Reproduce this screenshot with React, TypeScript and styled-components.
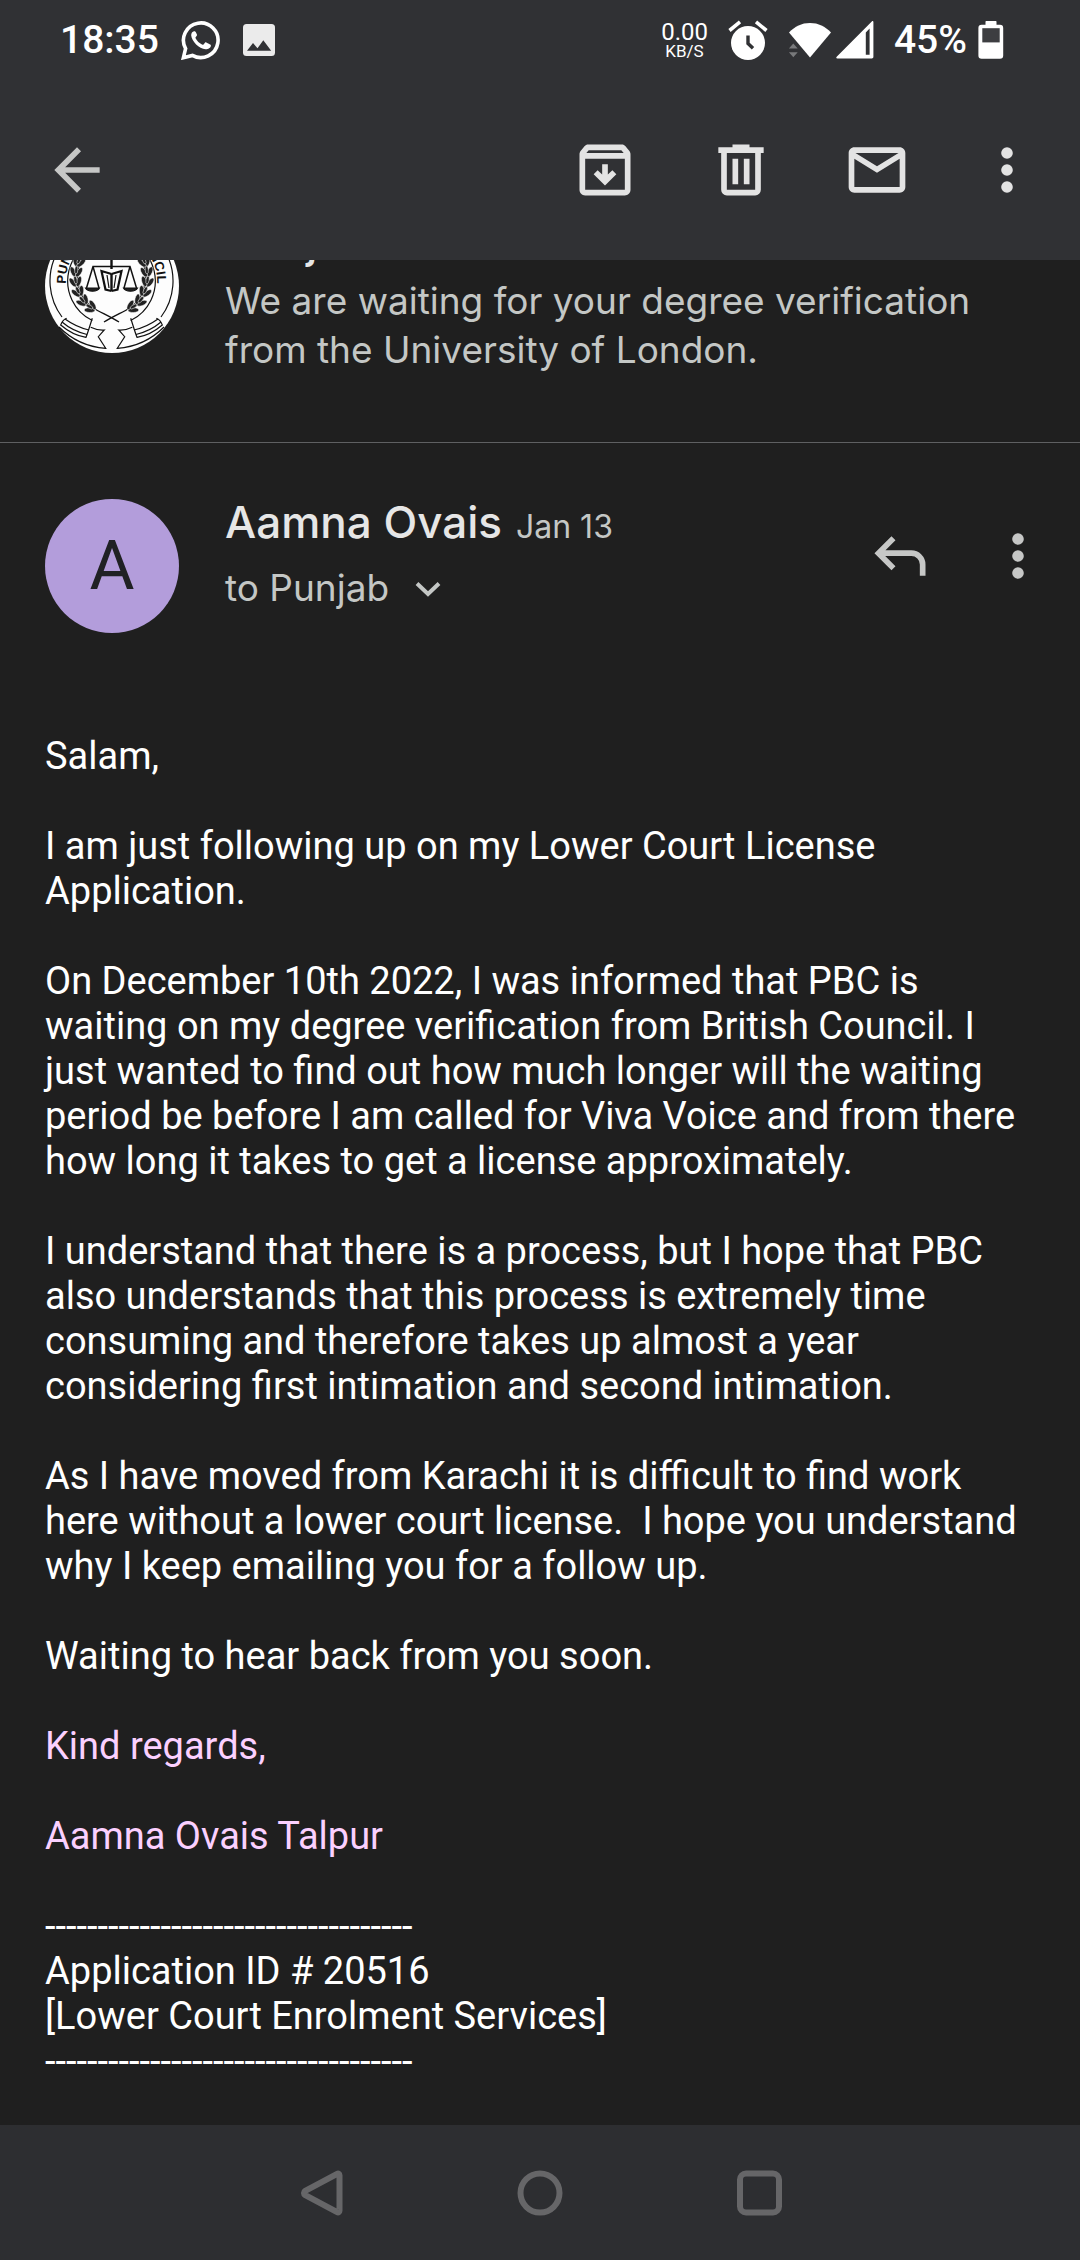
import React from "react";
import styled, { createGlobalStyle } from "styled-components";

const color = {
  bar: "#303134",
  nav: "#2d2e31",
  surface: "#1f1f1f",
  divider: "#5f6062",
  icon: "#e3e3e3",
  iconMuted: "#c6c7c6",
  navIcon: "#666668",
  title: "#e6e6e6",
  muted: "#c4c7c5",
  signature: "#fbd0ff",
};

const GlobalStyle = createGlobalStyle`
  *, *::before, *::after { box-sizing: border-box; }
  body {
    margin: 0;
    background: ${color.surface};
    font-family: Roboto, "Noto Sans", sans-serif;
  }
`;

const Screen = styled.div`
  display: flex;
  flex-direction: column;
  min-height: 100vh;
  background: ${color.surface};
`;

const StatusBar = styled.div`
  display: flex;
  align-items: center;
  justify-content: space-between;
  height: 80px;
  padding: 0 76px 0 60px;
  background: ${color.bar};
  color: #fff;
`;

const StatusGroup = styled.div<{ $gap: number }>`
  display: flex;
  align-items: center;
  gap: ${(p) => p.$gap}px;
`;

const StatusText = styled.span`
  font-size: 39px;
  font-weight: 500;
  line-height: 45px;
`;

const Speed = styled.div`
  display: flex;
  flex-direction: column;
  align-items: center;
`;

const SpeedValue = styled.span`
  font-size: 24px;
  line-height: 22px;
`;

const SpeedUnit = styled.span`
  font-size: 17px;
  line-height: 16px;
`;

const AppBar = styled.header`
  display: flex;
  align-items: center;
  justify-content: space-between;
  height: 180px;
  padding: 0 45px 0 43px;
  background: ${color.bar};
`;

const Actions = styled.div<{ $gap: number }>`
  display: flex;
  align-items: center;
  gap: ${(p) => p.$gap}px;
`;

const IconButton = styled.button<{ $width?: number; $muted?: boolean }>`
  display: flex;
  align-items: center;
  justify-content: center;
  width: ${(p) => p.$width ?? 68}px;
  height: 68px;
  padding: 0;
  border: 0;
  background: none;
  color: ${(p) => (p.$muted ? color.iconMuted : color.icon)};
  cursor: pointer;

  svg {
    flex: none;
    width: 68px;
    height: 68px;
  }
`;

const Thread = styled.main`
  flex: 1;
`;

const CollapsedMessage = styled.article`
  display: flex;
  align-items: flex-end;
  gap: 46px;
  height: 183px;
  padding: 0 45px;
  overflow: hidden;
  border-bottom: 1px solid ${color.divider};
`;

const Crest = styled.svg`
  flex: none;
  width: 134px;
  height: 134px;
  margin-bottom: 89px;
`;

const Preview = styled.div`
  padding-bottom: 68px;
  font-family: Inter, "Noto Sans", sans-serif;
`;

const SenderName = styled.h2`
  margin: 0;
  color: ${color.title};
  font-size: 44px;
  font-weight: 500;
  line-height: 64px;
`;

const PreviewText = styled.p`
  margin: 2px 0 0;
  color: ${color.muted};
  font-size: 37px;
  line-height: 49px;
`;

const Message = styled.article`
  padding: 47px 0 41px;
`;

const MessageHeader = styled.div`
  display: flex;
  align-items: flex-start;
  gap: 46px;
  padding: 0 34px 0 45px;
`;

const Avatar = styled.div`
  display: flex;
  flex: none;
  align-items: center;
  justify-content: center;
  width: 134px;
  height: 134px;
  margin-top: 9px;
  border-radius: 50%;
  background: #b39ddb;
  color: #202124;
  font-size: 69px;
  line-height: 80px;
`;

const Sender = styled.div`
  flex: 1;
  font-family: Inter, "Noto Sans", sans-serif;
`;

const SenderLine = styled.div`
  display: flex;
  align-items: baseline;
  gap: 14px;
`;

const DateText = styled.time`
  color: ${color.muted};
  font-size: 32px;
  line-height: 45px;
`;

const Recipients = styled.button`
  display: flex;
  align-items: center;
  gap: 24px;
  padding: 0;
  border: 0;
  background: none;
  color: ${color.muted};
  font-family: inherit;
  font-size: 37px;
  line-height: 68px;
  cursor: pointer;
`;

const MessageActions = styled(Actions)`
  height: 132px;
`;

const Body = styled.div`
  display: flex;
  flex-direction: column;
  gap: 45px;
  padding: 101px 45px 0;
`;

const Paragraph = styled.p<{ $signature?: boolean }>`
  margin: 0;
  color: ${(p) => (p.$signature ? color.signature : "#fff")};
  font-size: 38px;
  line-height: 45px;
`;

const NavBar = styled.nav`
  display: flex;
  align-items: center;
  justify-content: center;
  gap: 173px;
  height: 135px;
  background: ${color.nav};
`;

const NavButton = styled.button`
  display: flex;
  padding: 0;
  border: 0;
  background: none;
  color: ${color.navIcon};
  cursor: pointer;
`;

const WhatsAppIcon = () => (
  <svg width="40" height="40" viewBox="0 0 40 40">
    <path d="M4.6 28.6A17.3 17.3 0 1 1 11.4 35.4L2.4 37.7z" fill="none" stroke="#fff" strokeWidth="3.6" />
    <path
      d="M13 11.2c-1.5 0-3 2.2-2.8 4.3C10.8 21.5 18 28.8 24.6 29.3c2.4.1 5.2-1.6 5.3-3.6 0-1-.3-1.2-4.6-3.2-.9-.4-1.3.1-2.3 1.6-.6.8-1 .8-2 .3-2.8-1.4-4.9-3.5-6.3-6-.4-.8-.1-1.1.5-1.8 1-1.1 1-1.4.6-2.3-1.3-3-1.4-3.1-2.8-3.1z"
      fill="#fff"
    />
  </svg>
);

const ImageIcon = () => (
  <svg width="32" height="32" viewBox="0 0 32 32">
    <rect width="32" height="32" rx="3.5" fill="#ebebeb" />
    <path d="M4 26.7l6-7.7 4.5 5.3L20.3 16.3l7.9 10.4z" fill={color.bar} />
  </svg>
);

const AlarmIcon = () => (
  <svg width="40" height="40" viewBox="0 0 40 40">
    <circle cx="20" cy="23" r="17" fill="#fff" />
    <path d="M1.5 10.5L12 1.9M28 1.9l10.5 8.6" stroke="#fff" strokeWidth="3.6" />
    <path d="M20 15.5v8l5 4.8" fill="none" stroke={color.bar} strokeWidth="3.4" />
  </svg>
);

const WifiIcon = () => (
  <svg width="44" height="40" viewBox="0 0 44 40">
    <path d="M22 37.4L1 12.4C7 6.4 13.5 3 22 3s15 3.4 21 9.4z" fill="#fff" />
    <path d="M5.3 23.5l4.4 4.9H.9zM.9 32.2h8.8l-4.4 5z" fill="#78797b" />
  </svg>
);

const SignalIcon = () => (
  <svg width="38" height="40" viewBox="0 0 38 40">
    <path
      d="M35.8 1.4c.8-.7 1.6-.4 1.6.7v34.7c0 1-.6 1.6-1.6 1.6H1.4c-1.2 0-1.5-.8-.7-1.6zM29.8 12.6v22.2h3.8V8.4z"
      fill="#fff"
      fillRule="evenodd"
    />
  </svg>
);

const BatteryIcon = () => (
  <svg width="26" height="40" viewBox="0 0 26 40">
    <path
      d="M8.5 1h9c.8 0 1 .4 1 1v2.7H22a3.2 3.2 0 0 1 3.2 3.2v27.6a3.2 3.2 0 0 1-3.2 3.2H3.6a3.2 3.2 0 0 1-3.2-3.2V7.9a3.2 3.2 0 0 1 3.2-3.2h3.9V2c0-.6.2-1 1-1z"
      fill="#fff"
    />
    <path d="M4.3 8.2h17.4v14.2H4.3z" fill="#3d3e41" />
  </svg>
);

const BackIcon = () => (
  <svg viewBox="0 0 24 24" fill="currentColor">
    <path d="M20 11H7.83l5.59-5.59L12 4l-8 8 8 8 1.41-1.41L7.83 13H20z" />
  </svg>
);

const ArchiveIcon = () => (
  <svg viewBox="0 0 24 24" fill="currentColor">
    <path d="M20.54 5.23l-1.39-1.68C18.88 3.21 18.47 3 18 3H6c-.47 0-.88.21-1.16.55L3.46 5.23C3.17 5.57 3 6.02 3 6.5V19c0 1.1.9 2 2 2h14c1.1 0 2-.9 2-2V6.5c0-.48-.17-.93-.46-1.27zM6.24 5h11.52l.83 1H5.42zM5 19V8h14v11z" />
    <path d="M11 10h2v3.6l1.6-1.5L16 13.5l-4 4-4-4 1.4-1.4 1.6 1.5z" />
  </svg>
);

const TrashIcon = () => (
  <svg viewBox="0 0 24 24" fill="currentColor">
    <path d="M9 3h6v1h5v2h-1v13a2 2 0 0 1-2 2H7a2 2 0 0 1-2-2V6H4V4h5zM7 6v13h10V6z" fillRule="evenodd" />
    <path d="M9 8h2v9H9zM13 8h2v9h-2z" />
  </svg>
);

const MailIcon = () => (
  <svg viewBox="0 0 24 24" fill="currentColor">
    <path d="M22 6c0-1.1-.9-2-2-2H4c-1.1 0-2 .9-2 2v12c0 1.1.9 2 2 2h16c1.1 0 2-.9 2-2zM19.6 6L12 10.7 4.4 6zM20 18H4V8l8 5 8-5z" />
  </svg>
);

const MoreIcon = () => (
  <svg viewBox="0 0 24 24" fill="currentColor">
    <circle cx="12" cy="6" r="2.05" />
    <circle cx="12" cy="12" r="2.05" />
    <circle cx="12" cy="18" r="2.05" />
  </svg>
);

const ReplyIcon = () => (
  <svg viewBox="0 0 24 24" fill="none" stroke="currentColor" strokeWidth="2">
    <path d="M9.7 5.7L4.4 11l5.3 5.3M4.4 11H16a4 4 0 0 1 4 4v4" />
  </svg>
);

const ChevronIcon = () => (
  <svg width="30" height="20" viewBox="0 0 30 20" fill="none" stroke="currentColor" strokeWidth="4">
    <path d="M4 5.5l11 10.5L26 5.5" />
  </svg>
);

const leaves: [number, number, number][] = [
  [37, 35, 40],
  [33, 44, 20],
  [31, 54, 5],
  [31, 64, -10],
  [34, 74, -25],
  [39, 83, -40],
  [47, 89, -60],
];

/* One side of the crest; the other side is its mirror image. */
const CrestHalf = () => (
  <g fill="none" stroke="#111" strokeWidth="1.2">
    <path d="M66.5 2A60 60 0 0 0 17 98" />
    <path d="M66.5 18A44 44 0 0 0 47.3 101.5" />
    <path d="M40 33C28 52 30 76 48 89c9 5 18 9 26 14" strokeWidth="1.4" />
    {leaves.map(([x, y, turn]) => (
      <g key={y} transform={`translate(${x} ${y}) rotate(${turn})`} fill="#222" stroke="#fff" strokeWidth=".5">
        <ellipse cx="-3" cy="-1" rx="2.4" ry="5.4" transform="rotate(-28 -3 -1)" />
        <ellipse cx="3" cy="-1" rx="2.4" ry="5.4" transform="rotate(28 3 -1)" />
        <ellipse cx="0" cy="-3" rx="1.6" ry="4" />
      </g>
    ))}
    <path d="M66 47.5H48L41.500 69M48 47.500L54 69" strokeWidth="1.500" />
    <path d="M40.5 69h14c-2 4.200-12 4.200-14 0z" fill="#222" />
    <path d="M66.500 55l-10-3 4 18.500 6 1.500" strokeWidth="2.200" />
    <path d="M62 56l2 13" />
    <path d="M21.700 99.300c-3 1-5 4-6 6.700 7 6 16 11 25.300 12.300 2-5 4-12 6.300-19" />
    <path d="M17 103c7 6 15 10 25 12.500M20 100c7 5 15 9 24 11" />
    <path d="M45.700 108.300c4 2 9 3 13.600 2.700l-6 6.700 7.400 11.600C42 128 26 120 14 108" />
  </g>
);

const CouncilCrest = () => (
  <Crest viewBox="0 0 134 134" role="img" aria-label="Punjab Bar Council">
    <defs>
      <path id="crest-arc" d="M21 65A45.6 45.6 0 1 1 112 65" />
    </defs>
    <circle cx="67" cy="67" r="67" fill="#fdfdfd" />
    <CrestHalf />
    <g transform="matrix(-1 0 0 1 133 0)">
      <CrestHalf />
    </g>
    <path d="M66.5 30v20M66.5 55v17" stroke="#111" strokeWidth="2.4" />
    <text fontFamily="'Liberation Sans', sans-serif" fontWeight="700" fontSize="13" fill="#111" textAnchor="middle">
      <textPath href="#crest-arc" startOffset="50%">
        PUNJAB BAR COUNCIL
      </textPath>
    </text>
  </Crest>
);

const dashes = "-".repeat(35);

export default function App() {
  return (
    <Screen>
      <GlobalStyle />
      <StatusBar>
        <StatusGroup $gap={22}>
          <StatusText>18:35</StatusText>
          <WhatsAppIcon />
          <ImageIcon />
        </StatusGroup>
        <StatusGroup $gap={20}>
          <Speed>
            <SpeedValue>0.00</SpeedValue>
            <SpeedUnit>KB/S</SpeedUnit>
          </Speed>
          <AlarmIcon />
          <StatusGroup $gap={4}>
            <WifiIcon />
            <SignalIcon />
          </StatusGroup>
          <StatusGroup $gap={11}>
            <StatusText>45%</StatusText>
            <BatteryIcon />
          </StatusGroup>
        </StatusGroup>
      </StatusBar>

      <AppBar>
        <IconButton aria-label="Back" $muted>
          <BackIcon />
        </IconButton>
        <Actions $gap={68}>
          <IconButton aria-label="Archive">
            <ArchiveIcon />
          </IconButton>
          <IconButton aria-label="Delete">
            <TrashIcon />
          </IconButton>
          <IconButton aria-label="Mark as unread">
            <MailIcon />
          </IconButton>
          <IconButton aria-label="More options" $width={56}>
            <MoreIcon />
          </IconButton>
        </Actions>
      </AppBar>

      <Thread>
        <CollapsedMessage>
          <CouncilCrest />
          <Preview>
            <SenderName>Punjab</SenderName>
            <PreviewText>
              We are waiting for your degree verification from the University of London.
            </PreviewText>
          </Preview>
        </CollapsedMessage>

        <Message>
          <MessageHeader>
            <Avatar>A</Avatar>
            <Sender>
              <SenderLine>
                <SenderName>Aamna Ovais</SenderName>
                <DateText>Jan 13</DateText>
              </SenderLine>
              <Recipients>
                to Punjab
                <ChevronIcon />
              </Recipients>
            </Sender>
            <MessageActions $gap={56}>
              <IconButton aria-label="Reply" $muted>
                <ReplyIcon />
              </IconButton>
              <IconButton aria-label="Message options" $width={56} $muted>
                <MoreIcon />
              </IconButton>
            </MessageActions>
          </MessageHeader>

          <Body>
            <Paragraph>Salam,</Paragraph>
            <Paragraph>I am just following up on my Lower Court License Application.</Paragraph>
            <Paragraph>
              On December 10th 2022, I was informed that PBC is waiting on my degree verification from British
              Council. I just wanted to find out how much longer will the waiting period be before I am called for
              Viva Voice and from there how long it takes to get a license approximately.
            </Paragraph>
            <Paragraph>
              I understand that there is a process, but I hope that PBC also understands that this process is
              extremely time consuming and therefore takes up almost a year considering first intimation and second
              intimation.
            </Paragraph>
            <Paragraph>
              As I have moved from Karachi it is difficult to find work here without a lower court license.&nbsp; I
              hope you understand why I keep emailing you for a follow up.
            </Paragraph>
            <Paragraph>Waiting to hear back from you soon.</Paragraph>
            <Paragraph $signature>Kind regards,</Paragraph>
            <Paragraph $signature>Aamna Ovais Talpur</Paragraph>
            <Paragraph>
              {dashes}
              <br />
              Application ID # 20516
              <br />
              [Lower Court Enrolment Services]
              <br />
              {dashes}
            </Paragraph>
          </Body>
        </Message>
      </Thread>

      <NavBar>
        <NavButton aria-label="Back">
          <svg width="46" height="46" viewBox="0 0 46 46" fill="none" stroke="currentColor" strokeWidth="6">
            <path d="M41.5 5.2v35.6c0 1.5-1.2 2-2.4 1.2L7.3 25.2c-1.8-1.2-1.8-3.2 0-4.4L39.1 4c1.2-.8 2.4-.3 2.4 1.2z" />
          </svg>
        </NavButton>
        <NavButton aria-label="Home">
          <svg width="46" height="46" viewBox="0 0 46 46" fill="none" stroke="currentColor" strokeWidth="6">
            <circle cx="23" cy="23" r="19.5" />
          </svg>
        </NavButton>
        <NavButton aria-label="Recent apps">
          <svg width="46" height="46" viewBox="0 0 46 46" fill="none" stroke="currentColor" strokeWidth="6">
            <rect x="4" y="3.5" width="39" height="39" rx="6" />
          </svg>
        </NavButton>
      </NavBar>
    </Screen>
  );
}
